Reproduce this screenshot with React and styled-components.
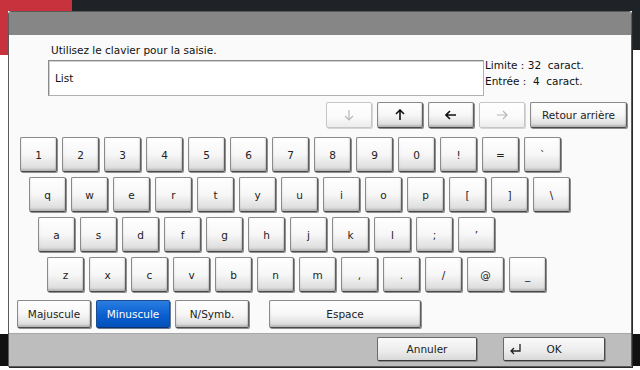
import React from "react";
import styled, { createGlobalStyle, css } from "styled-components";

const GlobalStyle = createGlobalStyle`
  html, body {
    margin: 0;
    padding: 0;
    background: #ffffff;
  }
  body {
    font-family: "DejaVu Sans", Verdana, sans-serif;
  }
`;

const Screen = styled.div`
  width: 640px;
  height: 370px;
  overflow: hidden;
  background:
    linear-gradient(#c8323c, #c8323c) 0 0 / 72px 11px no-repeat,
    linear-gradient(#1f2328, #1f2328) 0 0 / 100% 11px no-repeat,
    linear-gradient(#c8323c, #c8323c) 0 0 / 8px 55px no-repeat,
    linear-gradient(#1f2328, #1f2328) 100% 0 / 8px 50px no-repeat,
    linear-gradient(#111, #111) 0 334px / 8px 32px no-repeat,
    linear-gradient(#111, #111) 100% 334px / 8px 32px no-repeat,
    #ffffff;
  padding-top: 11px;
  box-sizing: border-box;
`;

const Dialog = styled.div`
  margin-left: 8px;
  width: 624px;
  height: 356px;
  box-sizing: border-box;
  border: 1px solid #5a5a5a;
  border-radius: 3px 3px 0 0;
  display: flex;
  flex-direction: column;
  overflow: hidden;
  box-shadow: 1px 1px 0 #2a2a2a;
`;

const TitleBar = styled.div`
  height: 23px;
  background: #868686;
  flex: none;
`;

const Body = styled.div`
  flex: 1;
  background: #fafafa;
  padding: 8px 4px 0 0;
  display: flex;
  flex-direction: column;
`;

const Prompt = styled.div`
  margin-left: 42px;
  font-size: 10.5px;
  line-height: 14px;
  color: #111;
`;

const InputRow = styled.div`
  margin-top: 3px;
  margin-left: 39px;
  display: flex;
  align-items: flex-start;
`;

const Input = styled.div`
  width: 436px;
  height: 36px;
  box-sizing: border-box;
  border: 1px solid #8a8a8a;
  border-right-color: #b0b0b0;
  border-bottom-color: #b0b0b0;
  box-shadow: inset 1px 1px 0 #d0d0d0;
  background: #fff;
  padding-left: 6px;
  display: flex;
  align-items: center;
  font-size: 10.5px;
  color: #111;
`;

const Counts = styled.div`
  margin-top: -3px;
  margin-left: 1px;
  font-size: 10.5px;
  line-height: 16px;
  color: #111;
  white-space: pre;
`;

const NavRow = styled.div`
  margin-top: 6px;
  display: flex;
  justify-content: flex-end;
  gap: 5px;
`;

const keyBase = css`
  box-sizing: border-box;
  display: flex;
  align-items: center;
  justify-content: center;
  border-radius: 2px;
  font-family: "DejaVu Sans", Verdana, sans-serif;
  font-size: 10.5px;
  font-weight: normal;
  color: #222;
  padding: 0;
  flex: none;
`;

const Key = styled.button`
  ${keyBase};
  width: ${(p) => p.$w || 37}px;
  height: ${(p) => p.$h || 35}px;
  margin-left: ${(p) => p.$ml || 0}px;
  border: 1px solid #8a8a8a;
  border-right-color: #5e5e5e;
  border-bottom-color: #4a4a4a;
  background: linear-gradient(#ffffff, #f7f7f7 50%, #d8d8d8);
  box-shadow: inset 0 -2px 2px rgba(0, 0, 0, 0.16), inset -1px 0 1px rgba(0, 0, 0, 0.1),
    1px 1px 0 #8e8e8e;

  ${(p) =>
    p.$active &&
    css`
      background: linear-gradient(#2a7ee0, #0a5fd0 55%, #0050b8);
      border-color: #1a4a90;
      border-bottom-color: #0c3270;
      color: #fff;
      box-shadow: 1px 1px 0 #6a7a90;
    `}

  ${(p) =>
    p.$disabled &&
    css`
      border-color: #c6c6c6;
      background: linear-gradient(#ffffff, #fafafa 60%, #ececec);
      box-shadow: 1px 1px 0 #d6d6d6;
    `}
`;

const Keyboard = styled.div`
  margin-top: 9px;
  display: flex;
  flex-direction: column;
  gap: 5px;
`;

const KeyRow = styled.div`
  display: flex;
  gap: 5px;
  padding-left: ${(p) => p.$indent}px;
`;

const ModeRow = styled.div`
  margin-top: 8px;
  display: flex;
  gap: 5px;
  padding-left: 8px;
`;

const Footer = styled.div`
  height: 33px;
  flex: none;
  box-sizing: border-box;
  background: #bdbdbd;
  border-top: 1px solid #a8a8a8;
  display: flex;
  justify-content: flex-end;
  align-items: flex-start;
  gap: 26px;
  padding: 3px 26px 0 0;
`;

const FooterButton = styled.button`
  ${keyBase};
  width: ${(p) => p.$w}px;
  height: 24px;
  border: 1px solid #6a6a6a;
  border-right-color: #4a4a4a;
  border-bottom-color: #3a3a3a;
  background: linear-gradient(#fafafa, #ececec 60%, #d8d8d8);
  box-shadow: 1px 1px 0 #8a8a8a;
  position: relative;
`;

const OkIcon = styled.svg`
  position: absolute;
  left: 5px;
  top: 6px;
`;

const Arrow = ({ dir, color }) => {
  const paths = {
    down: "M6 1 V11 M2 7 L6 11 L10 7",
    up: "M6 11 V1 M2 5 L6 1 L10 5",
    left: "M1 6 H11 M5 2 L1 6 L5 10",
    right: "M11 6 H1 M7 2 L11 6 L7 10",
  };
  return (
    <svg width="12" height="12" viewBox="0 0 12 12">
      <path d={paths[dir]} fill="none" stroke={color} strokeWidth={dir === "up" || dir === "left" ? 1.6 : 1.2} />
    </svg>
  );
};

const rows = [
  { indent: 11, keys: ["1", "2", "3", "4", "5", "6", "7", "8", "9", "0", "!", "=", "`"] },
  { indent: 20, keys: ["q", "w", "e", "r", "t", "y", "u", "i", "o", "p", "[", "]", "\\"] },
  { indent: 29, keys: ["a", "s", "d", "f", "g", "h", "j", "k", "l", ";", "\u2019"] },
  { indent: 38, keys: ["z", "x", "c", "v", "b", "n", "m", ",", ".", "/", "@", "_"] },
];

export default function App() {
  return (
    <>
      <GlobalStyle />
      <Screen>
        <Dialog>
          <TitleBar />
          <Body>
            <Prompt>Utilisez le clavier pour la saisie.</Prompt>
            <InputRow>
              <Input>List</Input>
              <Counts>
                {"Limite : 32  caract.\nEntrée :  4  caract."}
              </Counts>
            </InputRow>
            <NavRow>
              <Key $w={46} $h={26} $disabled>
                <Arrow dir="down" color="#b8b8b8" />
              </Key>
              <Key $w={46} $h={26}>
                <Arrow dir="up" color="#111" />
              </Key>
              <Key $w={46} $h={26}>
                <Arrow dir="left" color="#111" />
              </Key>
              <Key $w={46} $h={26} $disabled>
                <Arrow dir="right" color="#b8b8b8" />
              </Key>
              <Key $w={97} $h={26}>Retour arrière</Key>
            </NavRow>
            <Keyboard>
              {rows.map((row, i) => (
                <KeyRow key={i} $indent={row.indent}>
                  {row.keys.map((k) => (
                    <Key key={k}>{k}</Key>
                  ))}
                </KeyRow>
              ))}
            </Keyboard>
            <ModeRow>
              <Key $w={74} $h={28}>Majuscule</Key>
              <Key $w={74} $h={28} $active>Minuscule</Key>
              <Key $w={74} $h={28}>N/Symb.</Key>
              <Key $w={152} $h={28} $ml={15}>Espace</Key>
            </ModeRow>
          </Body>
          <Footer>
            <FooterButton $w={100}>Annuler</FooterButton>
            <FooterButton $w={102}>
              <OkIcon width="13" height="11" viewBox="0 0 13 11">
                <path d="M11 0 V7 H2 M5 4 L2 7 L5 10" fill="none" stroke="#222" strokeWidth="1.3" />
              </OkIcon>
              OK
            </FooterButton>
          </Footer>
        </Dialog>
      </Screen>
    </>
  );
}
